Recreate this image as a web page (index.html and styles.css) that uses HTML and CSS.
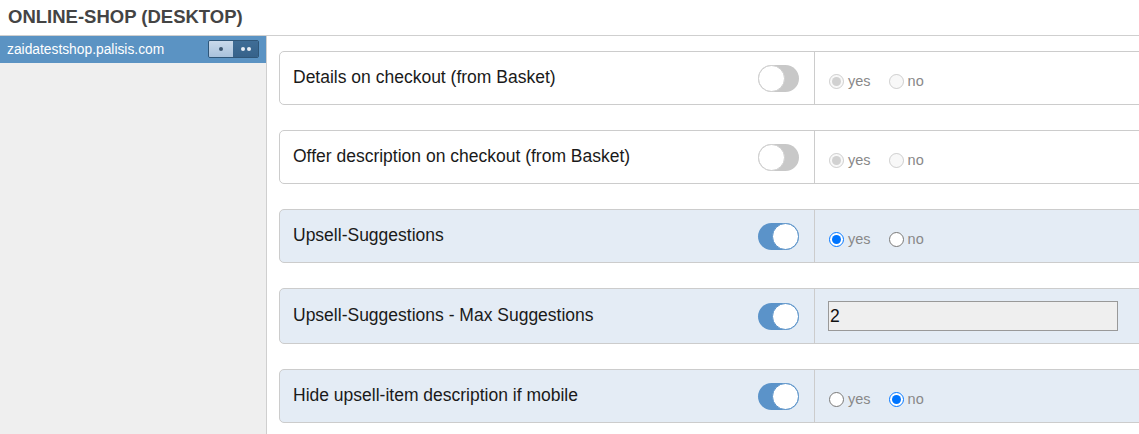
FILE: index.html
```html
<!DOCTYPE html>
<html>
<head>
<meta charset="utf-8">
<link rel="stylesheet" href="styles.css">
</head>
<body>
<header class="topbar"><h1 class="title">ONLINE-SHOP (DESKTOP)</h1></header>
<div class="layout">
  <aside class="sidebar">
    <div class="shop-item">
      <span class="shop-name">zaidatestshop.palisis.com</span>
      <span class="seg">
        <span class="seg-btn seg-one"><i class="dot dark"></i></span>
        <span class="seg-btn seg-two"><i class="dot"></i><i class="dot"></i></span>
      </span>
    </div>
  </aside>
  <main class="main">
    <div class="card">
      <div class="card-left"><span class="label">Details on checkout (from Basket)</span><span class="toggle off"><span class="knob"></span></span></div>
      <div class="card-right">
        <label class="opt"><input type="radio" name="r1" checked disabled><span>yes</span></label>
        <label class="opt"><input type="radio" name="r1" disabled><span>no</span></label>
      </div>
    </div>
    <div class="card">
      <div class="card-left"><span class="label">Offer description on checkout (from Basket)</span><span class="toggle off"><span class="knob"></span></span></div>
      <div class="card-right">
        <label class="opt"><input type="radio" name="r2" checked disabled><span>yes</span></label>
        <label class="opt"><input type="radio" name="r2" disabled><span>no</span></label>
      </div>
    </div>
    <div class="card active">
      <div class="card-left"><span class="label">Upsell-Suggestions</span><span class="toggle on"><span class="knob"></span></span></div>
      <div class="card-right">
        <label class="opt"><input type="radio" name="r3" checked><span>yes</span></label>
        <label class="opt"><input type="radio" name="r3"><span>no</span></label>
      </div>
    </div>
    <div class="card active tall">
      <div class="card-left"><span class="label">Upsell-Suggestions - Max Suggestions</span><span class="toggle on"><span class="knob"></span></span></div>
      <div class="card-right">
        <input class="num" type="text" value="2">
      </div>
    </div>
    <div class="card active">
      <div class="card-left"><span class="label">Hide upsell-item description if mobile</span><span class="toggle on"><span class="knob"></span></span></div>
      <div class="card-right">
        <label class="opt"><input type="radio" name="r5"><span>yes</span></label>
        <label class="opt"><input type="radio" name="r5" checked><span>no</span></label>
      </div>
    </div>
  </main>
</div>
</body>
</html>
```
FILE: styles.css
```css
* { box-sizing: border-box; }
html, body { margin: 0; padding: 0; height: 100%; overflow: hidden; }
body {
  font-family: "Liberation Sans", Arial, sans-serif;
  background: #fff;
  color: #222;
  width: 1139px;
  height: 434px;
  display: flex;
  flex-direction: column;
}
.topbar {
  height: 36px;
  border-bottom: 1px solid #cfcfcf;
  padding: 0 8px;
  display: flex;
  align-items: center;
}
.title {
  margin: 0;
  font-size: 18.5px;
  font-weight: bold;
  color: #444;
  position: relative;
  top: -1px;
}
.layout {
  flex: 1;
  display: flex;
  min-height: 0;
}
.sidebar {
  width: 267px;
  flex: none;
  background: #efefef;
  border-right: 1px solid #cfcfcf;
}
.shop-item {
  height: 27px;
  background: #5b93c3;
  display: flex;
  align-items: center;
  justify-content: space-between;
  padding: 0 7px 0 7px;
}
.shop-name {
  color: #fff;
  font-size: 13.8px;
}
.seg {
  display: flex;
  height: 18px;
  border: 1px solid #2f5678;
  border-radius: 2px;
  overflow: hidden;
  margin-top: -2px;
}
.seg-btn {
  width: 24px;
  display: flex;
  align-items: center;
  justify-content: center;
  gap: 2px;
}
.seg-one { background: linear-gradient(#c9d9ea, #a9c2dc); }
.seg-two { background: linear-gradient(#3f6d96, #36628a); width: 25px; }
.dot {
  width: 4px; height: 4px; border-radius: 50%;
  background: #e8eef5;
  display: block;
}
.dot.dark { background: #3c5670; }
.main {
  flex: 1;
  overflow: hidden;
  padding: 15px 0 0 12px;
  display: flex;
  flex-direction: column;
  gap: 25px;
}
.card {
  width: 900px;
  height: 54px;
  flex: none;
  display: flex;
  border: 1px solid #cccccc;
  border-radius: 5px;
  background: #fff;
}
.card.active { background: #e4ecf5; }
.card.tall { height: 56px; }
.card-left {
  width: 534px;
  flex: none;
  display: flex;
  align-items: center;
  justify-content: space-between;
  padding: 0 15px 0 13px;
}
.label {
  font-size: 17.5px;
  color: #1a1a1a;
  position: relative;
  top: -1px;
}
.toggle {
  width: 41px;
  height: 27px;
  border-radius: 14px;
  position: relative;
  flex: none;
}
.toggle.off { background: #c8c8c8; }
.toggle.on { background: #5b93c9; }
.knob {
  position: absolute;
  top: 0;
  width: 27px;
  height: 27px;
  border-radius: 50%;
  background: #fff;
}
.toggle.off .knob { left: 0; border: 1px solid #cfcfcf; }
.toggle.on .knob { right: 0; border: 1px solid #5b93c9; }
.card-right {
  flex: 1;
  border-left: 1px solid #cccccc;
  display: flex;
  align-items: center;
  padding: 6px 0 0 13px;
  gap: 17px;
}
.tall .card-right { padding-top: 0; }
.opt {
  display: flex;
  align-items: center;
  font-size: 14.5px;
  color: #888;
}
.opt input {
  margin: 0 4px 0 1px;
  width: 15px;
  height: 15px;
}
.num {
  width: 290px;
  height: 30px;
  margin: 0;
  border: 1px solid #999;
  background: #efefef;
  font-family: "Liberation Sans", Arial, sans-serif;
  font-size: 17.5px;
  padding: 0 1px;
  color: #111;
}
```
